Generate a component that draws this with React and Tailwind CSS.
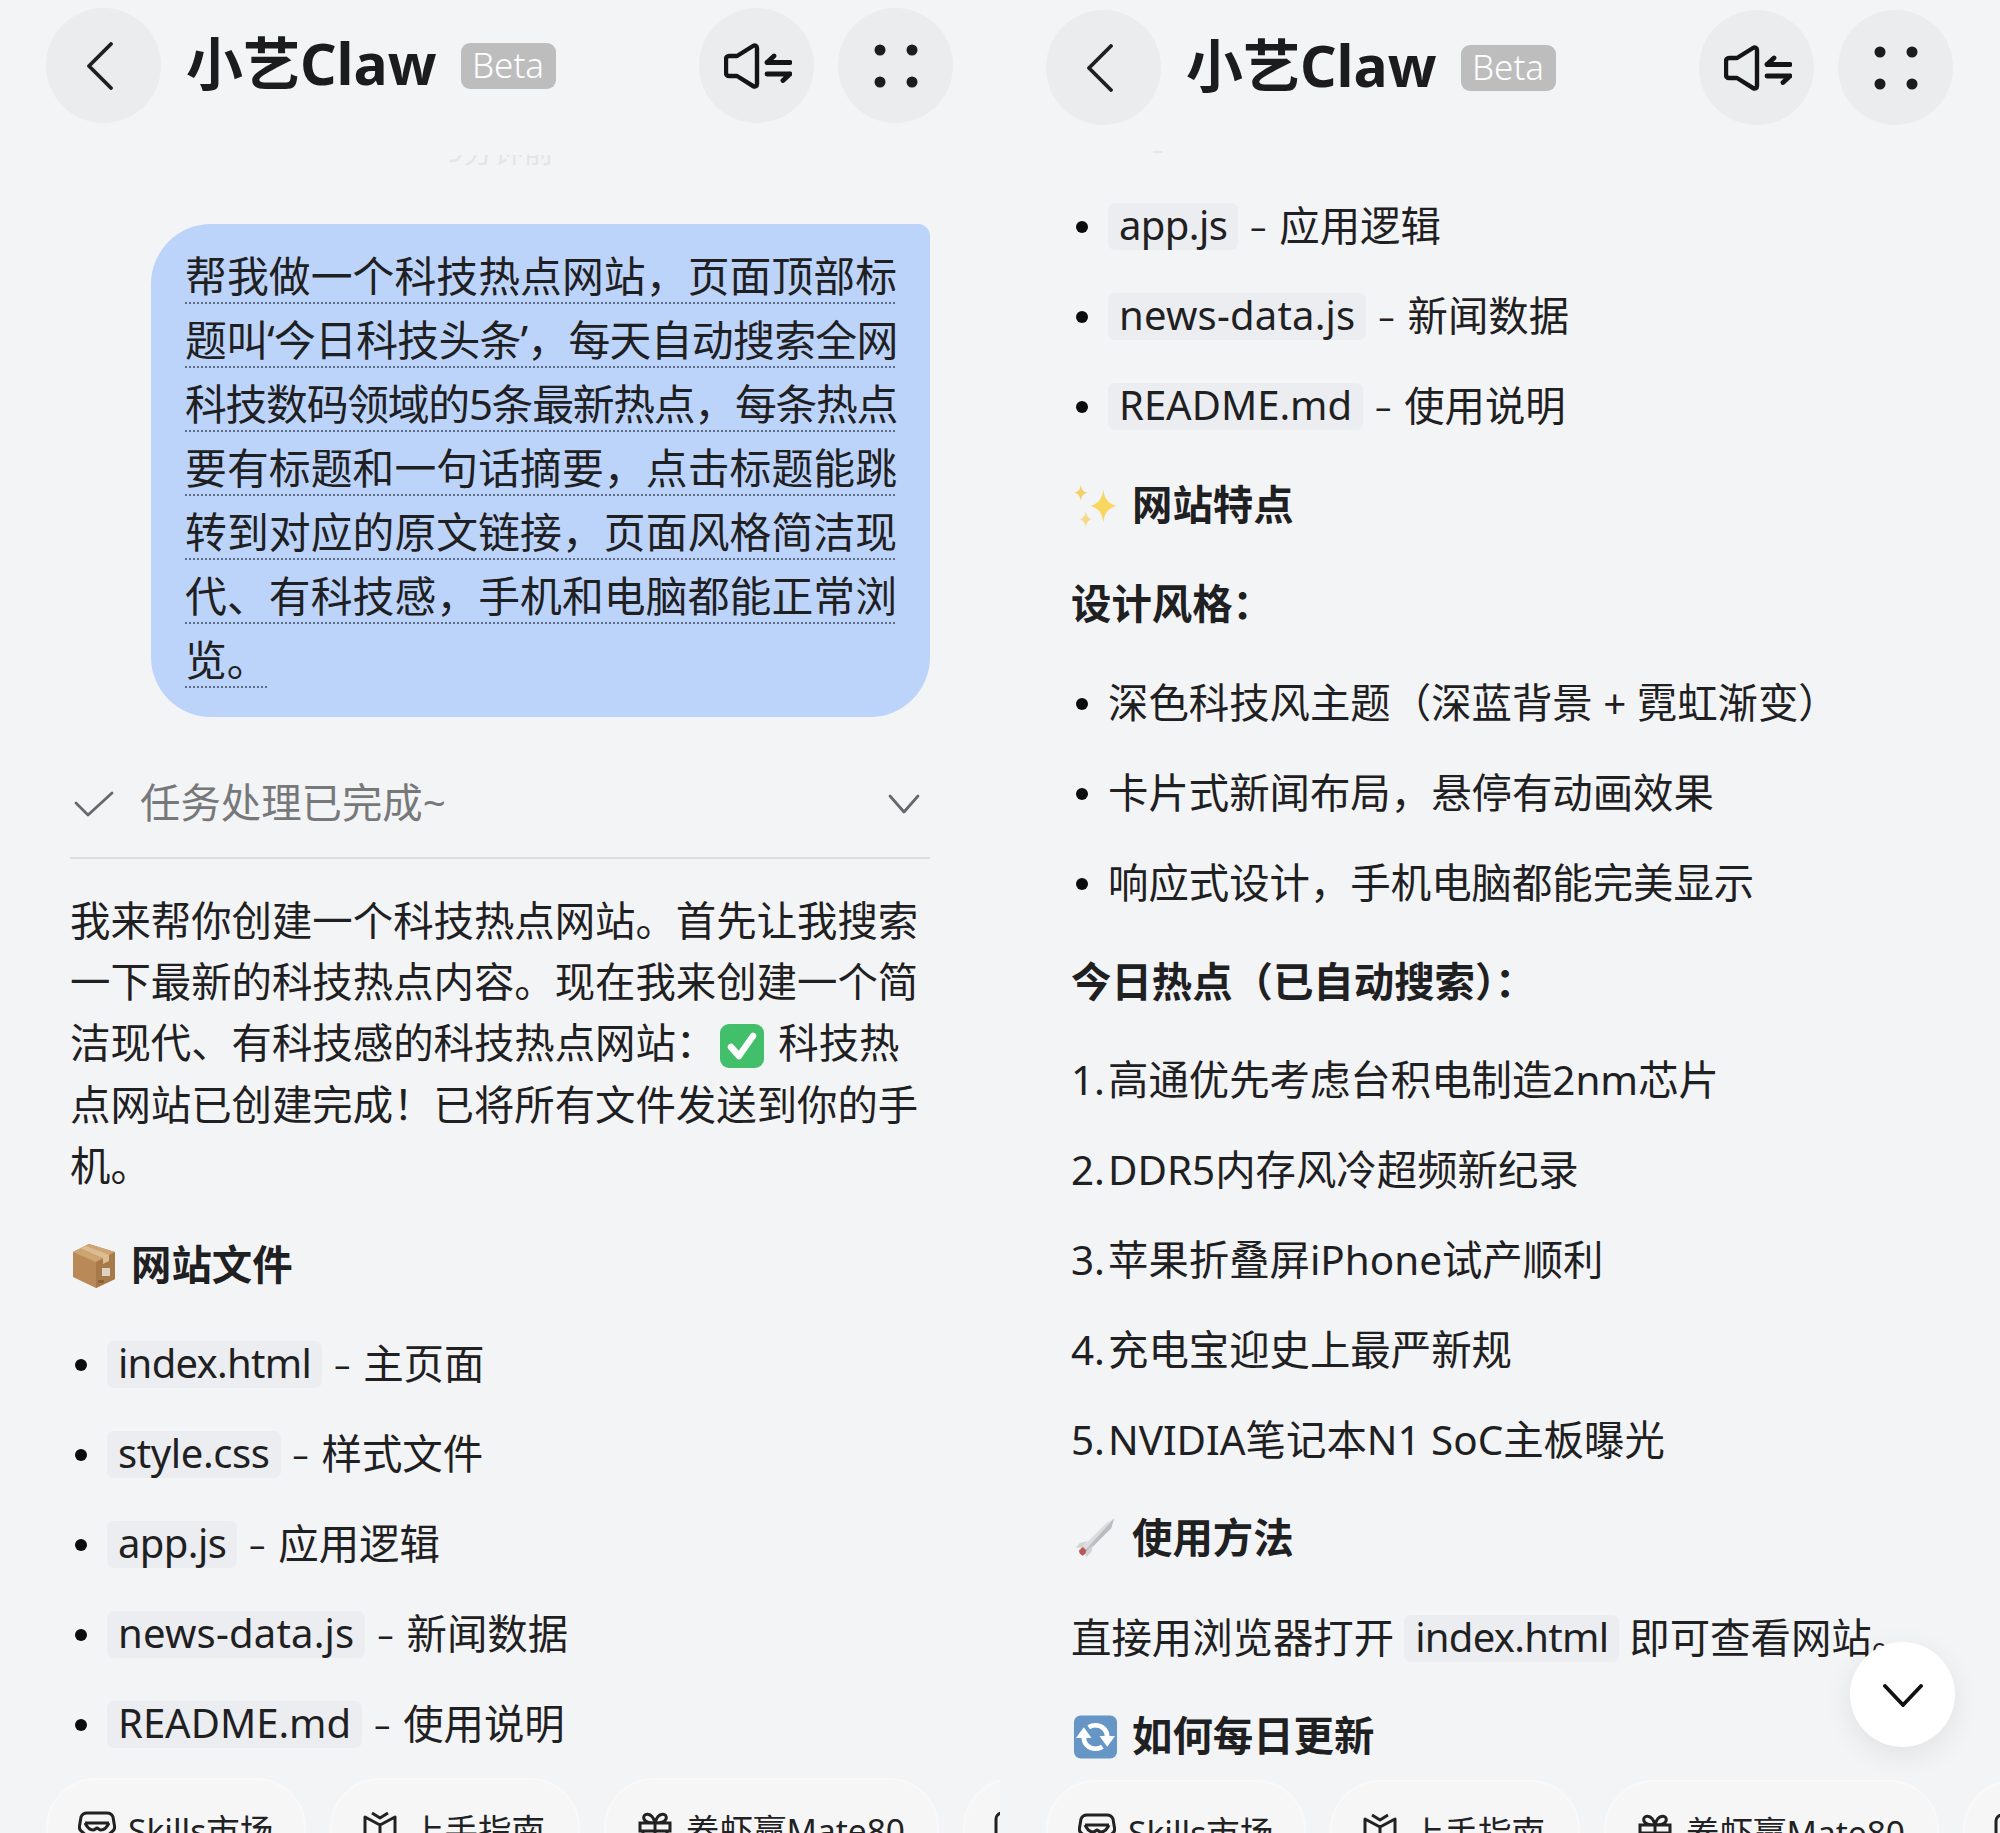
import React from "react";

const Back = () => (
  <svg width="28" height="48" viewBox="0 0 28 48" fill="none" stroke="#1f1f21" strokeWidth="3.800" strokeLinecap="round" strokeLinejoin="round"><path d="M25 2 3 24l22 22" /></svg>
);
const Speaker = () => (
  <svg width="68" height="46" viewBox="0 0 68 46" fill="none" stroke="#151517" strokeLinecap="round" strokeLinejoin="round">
    <path d="M5 13h8L29 3c2-1.200 4-.3 4 2v36c0 2.300-2 3.200-4 2L13 33H5c-1.700 0-3-1.300-3-3V16c0-1.700 1.300-3 3-3Z" strokeWidth="4.400" />
    <path d="M43 19.500h23M43 19.500l7-6.500M43 31h23M66 31l-7 6.500" strokeWidth="4.800" />
  </svg>
);
const Dots = () => (
  <svg width="44" height="44" viewBox="0 0 44 44" fill="#1c1c1e"><circle cx="6" cy="6" r="5.500" /><circle cx="38" cy="6" r="5.500" /><circle cx="6" cy="38" r="5.500" /><circle cx="38" cy="38" r="5.500" /></svg>
);
const CircleBtn = ({ children }) => (
  <div className="flex h-[115px] w-[115px] shrink-0 items-center justify-center rounded-full bg-[#ebecee]">{children}</div>
);
const Header = () => (
  <div className="flex items-center pr-[47px]">
    <CircleBtn><span className="mr-[8px] flex"><Back /></span></CircleBtn>
    <span className="ml-[25px] pb-[5px] text-[57px] font-bold leading-none text-[#1c1c1e]">小艺Claw</span>
    <span className="ml-[24px] flex h-[46px] w-[95px] items-center justify-center rounded-[9px] bg-[#bdbdbe] text-[35px] font-light text-white">Beta</span>
    <div className="ml-auto flex gap-[24px]">
      <CircleBtn><span className="ml-[3px] flex"><Speaker /></span></CircleBtn>
      <CircleBtn><Dots /></CircleBtn>
    </div>
  </div>
);

const CheckEmoji = () => (
  <svg className="ml-[3px] mr-[13px] inline-block align-[-11px]" width="46" height="46" viewBox="0 0 46 46">
    <rect x="1" y="1" width="44" height="44" rx="9" fill="#42bf6a" />
    <path d="M12 24l8 9 14-20" fill="none" stroke="#fff" strokeWidth="6.500" strokeLinecap="round" strokeLinejoin="round" />
  </svg>
);
const BoxEmoji = () => (
  <svg width="44" height="46" viewBox="0 0 44 46">
    <path d="M17 1 43 9v27L24 45 1 34V9Z" fill="#b98a57" />
    <path d="M17 1 43 9 24 19 1 9Z" fill="#cfa473" />
    <path d="M24 19 43 9v27L24 45Z" fill="#a87a49" />
    <path d="M8 5 31 15v6l6-3v-6L14 3Z" fill="#dcbd93" />
    <rect x="30" y="25" width="8" height="8" fill="#dcd2c2" />
    <rect x="26" y="37" width="6" height="3" fill="#8a6238" />
  </svg>
);
const Sparkles = () => (
  <svg width="46" height="46" viewBox="0 0 46 46" fill="#f8d65f">
    <path d="M31 6c1 9 4 14 13 17-9 3-12 8-13 17-1-9-4-14-13-17 9-3 12-8 13-17Z" />
    <path d="M8 1c.7 5 2 7 6.500 8.500C10 11 8.700 13 8 18c-.7-5-2-7-6.500-8.500C6 8 7.300 6 8 1Z" fill="#f6cf66" />
    <path d="M13 28c.7 5 2 7 6 8.500-4 1.500-5.300 3.500-6 8.500-.7-5-2-7-6-8.500 4-1.500 5.300-3.500 6-8.500Z" fill="#f7d888" />
  </svg>
);
const Rocket = () => (
  <svg width="46" height="46" viewBox="0 0 46 46">
    <path d="M42 2 34 7 10 31l5 5L39 12Z" fill="#dcdcde" />
    <path d="M42 2 39 12 15 36l-2-2Z" fill="#bcbdc1" />
    <path d="M10 31l5 5-5 4-3-2-1-3Z" fill="#b65a58" />
    <path d="M15 25l-8 2-4 5 6 0ZM20 29l-1 7-6 6 0-6Z" fill="#d2d2d4" />
  </svg>
);
const Refresh = () => (
  <svg width="46" height="46" viewBox="0 0 46 46">
    <rect x="1" y="1" width="44" height="44" rx="7" fill="#6596c5" />
    <path d="M35 23c0-7-5-12-12-12-2.500 0-5 .7-7 2" fill="none" stroke="#fff" strokeWidth="4.800" />
    <path d="M11 23c0 7 5 12 12 12 2.500 0 5-.7 7-2" fill="none" stroke="#fff" strokeWidth="4.800" />
    <path d="M3 24h16l-8-11ZM43 22H27l8 11Z" fill="#fff" />
  </svg>
);

const Code = ({ children, cls }) => (
  <span className={`inline-block h-[47px] shrink-0 rounded-[7px] bg-[#ebedf0] px-[11px] text-[40px] leading-[44px] ${cls}`}>{children}</span>
);
const Bullet = ({ children }) => (
  <div className="relative flex h-[61px] items-center whitespace-nowrap pl-[37px]">
    <span className="absolute left-[5px] top-[25px] h-[12px] w-[12px] rounded-full bg-[#0c0c0e]" />
    {children}
  </div>
);
const FileRow = ({ name, desc, cls }) => (
  <Bullet>
    <Code cls={cls}>{name}</Code>
    <span className="ml-[12px] mr-[13px] text-[32px]">–</span>
    <span>{desc}</span>
  </Bullet>
);
const Heading = ({ icon, children, cls }) => (
  <div className={`flex h-[61px] items-center font-bold ${cls}`}>
    <span className="ml-[2px] mr-[14px] flex w-[45px] shrink-0">{icon}</span>{children}
  </div>
);
const Num = ({ n, children }) => (
  <div className="flex h-[61px] items-center whitespace-nowrap"><span className="w-[37px] shrink-0">{n}.</span>{children}</div>
);

const Chip = ({ width, pad, icon, gap, children }) => (
  <div className={`flex h-[104px] shrink-0 items-center rounded-[50px] border-2 border-[#f9f9fa] bg-[#f6f6f7] ${width} ${pad}`}>
    {icon}
    {children ? <span className={`whitespace-nowrap ${gap}`}>{children}</span> : null}
  </div>
);
const Chips = () => (
  <div className="flex gap-[24px] text-[33.5px] text-[#222224]">
    <Chip width="w-[260px]" pad="pl-[30px]" gap="ml-[12px]" icon={
      <svg width="38" height="40" viewBox="0 0 38 40" fill="none" stroke="#222" strokeWidth="3" strokeLinejoin="round"><path d="M9 3h20c3 0 5 1.500 6 4l1.500 9c.5 3-1 5-3 6L19 36 4.500 22c-2-1-3.500-3-3-6L3 7c1-2.500 3-4 6-4ZM7 13h24M7 13c3 6 6 7 8 7s3-2 4-2 2 2 4 2 5-1 8-7" /></svg>
    }>Skills市场</Chip>
    <Chip width="w-[250px]" pad="pl-[30px]" gap="ml-[13px]" icon={
      <svg width="36" height="40" viewBox="0 0 36 40" fill="none" stroke="#222" strokeWidth="3"><path d="M3 7l15 8L33 7v29H3ZM18 15v21M10 3l8 5 8-5" strokeLinejoin="round" /></svg>
    }>上手指南</Chip>
    <Chip width="w-[335px]" pad="pl-[32px]" gap="ml-[14px]" icon={
      <svg width="34" height="40" viewBox="0 0 34 40" fill="none" stroke="#222" strokeWidth="3"><path d="M2 13h30v8H2ZM5 21v16h24V21M17 13v24M17 13c-3-12-13-10-11-4 1 3 6 4 11 4Zm0 0c3-12 13-10 11-4-1 3-6 4-11 4Z" /></svg>
    }>养虾赢Mate80</Chip>
    <Chip width="w-[200px]" pad="pl-[28px]" icon={
      <svg width="36" height="40" viewBox="0 0 36 40" fill="none" stroke="#222" strokeWidth="3"><rect x="3" y="3" width="30" height="34" rx="6" /></svg>
    } />
  </div>
);

const bubbleLine = "whitespace-nowrap underline decoration-[#5d6d85] decoration-dotted decoration-2 underline-offset-[10px] [text-decoration-skip-ink:none] [text-align-last:justify]";
const Bubble = () => (
  <div className="ml-[105px] mt-[58px] w-[779px] rounded-[60px] rounded-tr-[12px] bg-[#bcd3fa] pb-[25px] pl-[34px] pr-[33px] pt-[20px] text-[41.8px] leading-[64px]">
    <div className={bubbleLine}>帮我做一个科技热点网站，页面顶部标</div>
    <div className={`${bubbleLine} tracking-[-1.2px]`}>题叫‘今日科技头条’，每天自动搜索全网</div>
    <div className={`${bubbleLine} tracking-[-1.400px]`}>科技数码领域的5条最新热点，每条热点</div>
    <div className={bubbleLine}>要有标题和一句话摘要，点击标题能跳</div>
    <div className={bubbleLine}>转到对应的原文链接，页面风格简洁现</div>
    <div className={bubbleLine}>代、有科技感，手机和电脑都能正常浏</div>
    <div className="whitespace-nowrap underline decoration-[#5d6d85] decoration-dotted decoration-2 underline-offset-[10px] [text-decoration-skip-ink:none]">览。</div>
  </div>
);

const Left = () => (
  <div className="relative h-[1833px] w-[1000px] shrink-0 overflow-hidden pl-[46px] pt-[8px]">
    <Header />
    <div className="mt-[32px] flex h-[11px] w-[908px] items-end justify-center overflow-hidden text-[30px] leading-[30px] text-[#e4e5e7]"><span>9分钟前</span></div>
    <Bubble />
    <div className="ml-[24px] w-[860px] text-[40.4px]">
      <div className="mt-[56px] flex h-[61px] items-center text-[#77787a]">
        <svg className="ml-[4px]" width="40" height="26" viewBox="0 0 40 26" fill="none" stroke="#66686b" strokeWidth="2.800" strokeLinecap="round" strokeLinejoin="round"><path d="M2 12l12 12L38 2" /></svg>
        <span className="ml-[26px]">任务处理已完成~</span>
        <svg className="ml-auto mr-[10px]" width="32" height="20" viewBox="0 0 32 20" fill="none" stroke="#66686b" strokeWidth="2.800" strokeLinecap="round" strokeLinejoin="round"><path d="M2 2l14 16L30 2" /></svg>
      </div>
      <div className="mt-[23px] h-[2px] bg-[#dcdddf]" />
      <p className="mt-[31px] w-[858px] leading-[61.2px]">我来帮你创建一个科技热点网站。首先让我搜索一下最新的科技热点内容。现在我来创建一个简洁现代、有科技感的科技热点网站：<CheckEmoji />科技热点网站已创建完成！已将所有文件发送到你的手机。</p>
      <Heading cls="mt-[39px]" icon={<BoxEmoji />}>网站文件</Heading>
      <div className="mt-[38px] flex flex-col gap-[29px]">
        <FileRow name="index.html" desc="主页面" cls="tracking-[-0.7px]" />
        <FileRow name="style.css" desc="样式文件" cls="tracking-[-0.4px]" />
        <FileRow name="app.js" desc="应用逻辑" cls="tracking-[-0.6px]" />
        <FileRow name="news-data.js" desc="新闻数据" cls="tracking-[0.2px]" />
        <FileRow name="README.md" desc="使用说明" cls="tracking-[0px]" />
      </div>
    </div>
    <div className="absolute left-[46px] top-[1778px]"><Chips /></div>
  </div>
);

const Right = () => (
  <div className="relative h-[1833px] w-[1000px] shrink-0 overflow-hidden pl-[46px] pt-[10px]">
    <Header />
    <div className="ml-[107px] mt-[26px] h-[2px] w-[9px] bg-[#e6e7e9]" />
    <div className="ml-[25px] mt-[43px] w-[880px] text-[40.4px]">
      <div className="flex flex-col gap-[29px]">
        <FileRow name="app.js" desc="应用逻辑" cls="tracking-[-0.6px]" />
        <FileRow name="news-data.js" desc="新闻数据" cls="tracking-[0.2px]" />
        <FileRow name="README.md" desc="使用说明" cls="tracking-[0px]" />
      </div>
      <Heading cls="mt-[38px]" icon={<Sparkles />}>网站特点</Heading>
      <div className="mt-[37px] h-[61px] font-bold leading-[61px]">设计风格：</div>
      <div className="mt-[39px] flex flex-col gap-[29px]">
        <Bullet>深色科技风主题（深蓝背景 + 霓虹渐变）</Bullet>
        <Bullet>卡片式新闻布局，悬停有动画效果</Bullet>
        <Bullet>响应式设计，手机电脑都能完美显示</Bullet>
      </div>
      <div className="mt-[37px] h-[61px] font-bold leading-[61px]">今日热点（已自动搜索）：</div>
      <div className="mt-[38px] flex flex-col gap-[29px]">
        <Num n="1">高通优先考虑台积电制造2nm芯片</Num>
        <Num n="2">DDR5内存风冷超频新纪录</Num>
        <Num n="3">苹果折叠屏iPhone试产顺利</Num>
        <Num n="4">充电宝迎史上最严新规</Num>
        <Num n="5">NVIDIA笔记本N1 SoC主板曝光</Num>
      </div>
      <Heading cls="mt-[37px]" icon={<Rocket />}>使用方法</Heading>
      <div className="mt-[39px] flex h-[61px] items-center whitespace-nowrap">直接用浏览器打开<Code cls="mx-[10px] tracking-[-0.7px]">index.html</Code>即可查看网站。</div>
      <Heading cls="mt-[37px]" icon={<Refresh />}>如何每日更新</Heading>
    </div>
    <div className="absolute left-[850px] top-[1642px] flex h-[105px] w-[105px] items-center justify-center rounded-full bg-white shadow-[0_8px_30px_rgba(0,0,0,0.08)]">
      <svg width="40" height="24" viewBox="0 0 40 24" fill="none" stroke="#111" strokeWidth="3.800" strokeLinecap="round" strokeLinejoin="round"><path d="M2 3l18 19L38 3" /></svg>
    </div>
    <div className="absolute left-[46px] top-[1780px]"><Chips /></div>
  </div>
);

export default function App() {
  return (
    <div lang="zh-CN" className="flex h-[1833px] w-[2000px] overflow-hidden bg-[#f3f4f6] font-['Noto_Sans','Noto_Sans_CJK_SC',sans-serif] text-[#1f2022]">
      <Left />
      <Right />
    </div>
  );
}
